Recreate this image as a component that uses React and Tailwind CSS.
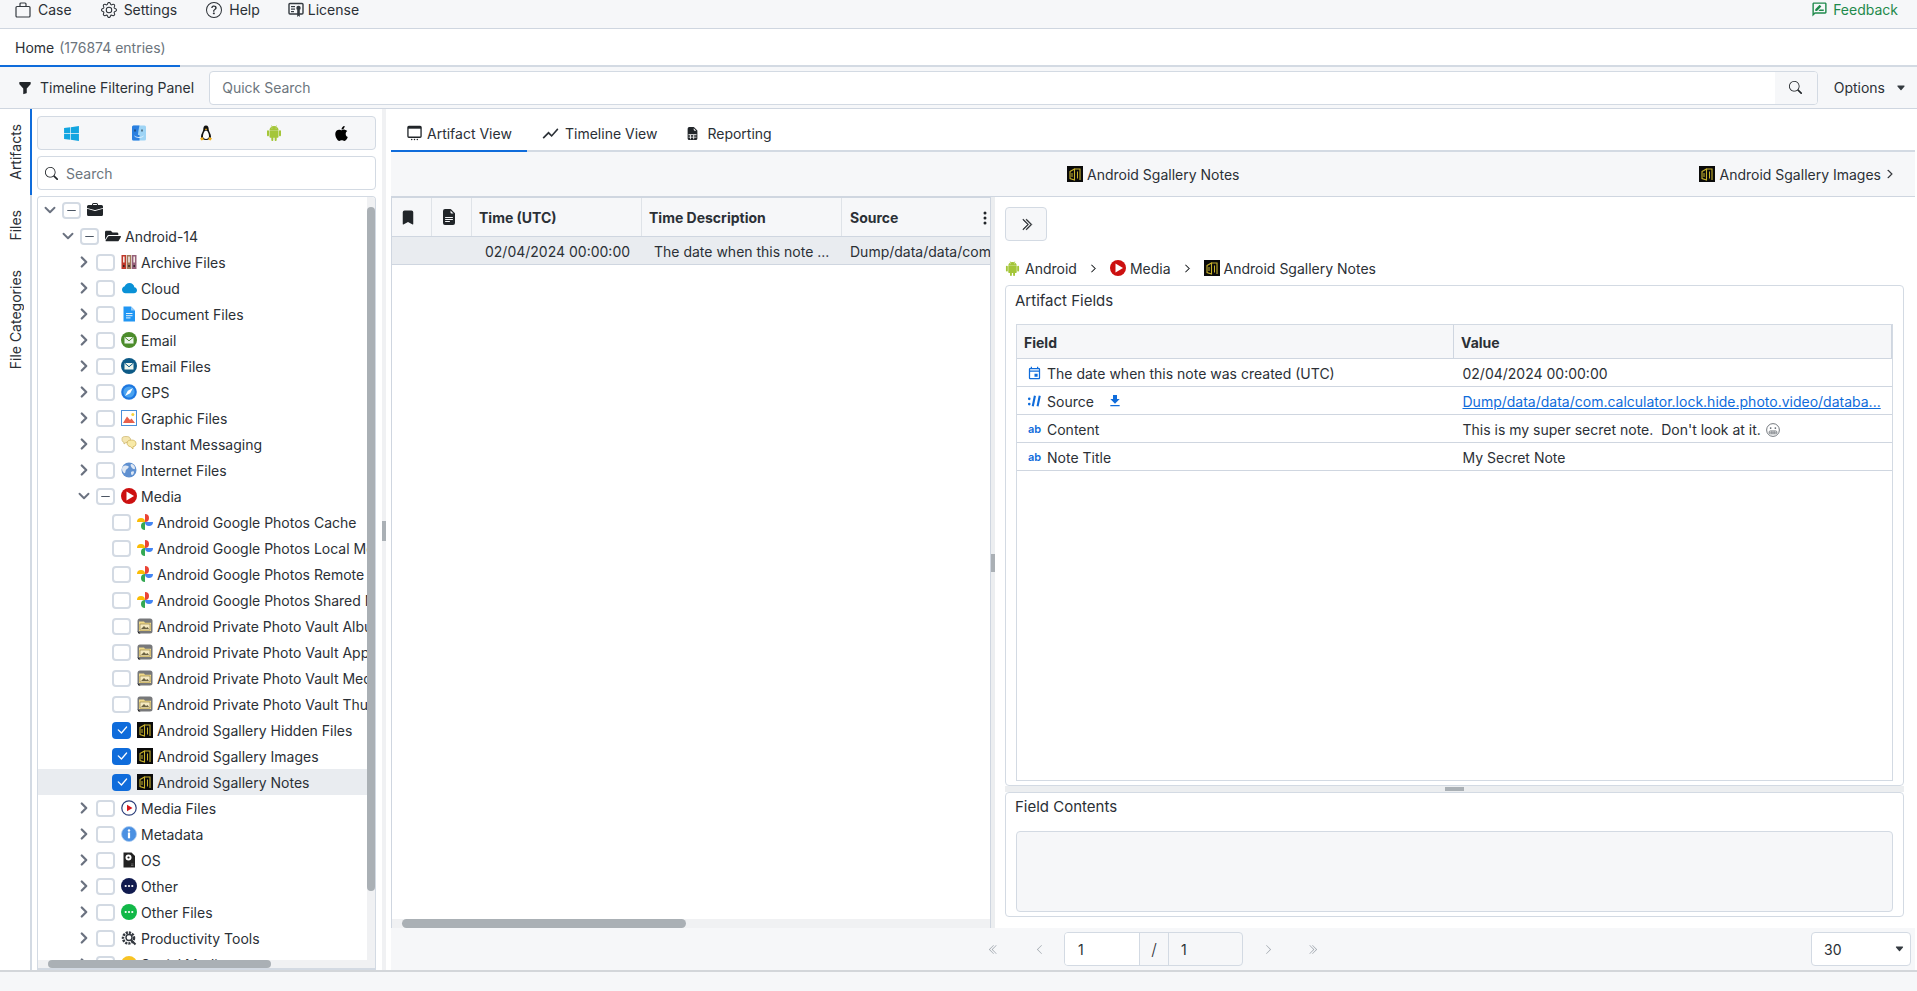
import React from "react";
import {
  BsGear, BsQuestionCircle, BsFunnelFill, BsSearch, BsBriefcaseFill, BsCloudFill,
  BsChevronRight, BsChevronDoubleRight, BsChevronDoubleLeft, BsChevronLeft, BsThreeDotsVertical,
  BsFileEarmarkSpreadsheetFill, BsCheckLg, BsBookmarkFill, BsFileEarmarkTextFill, BsCaretDownFill, BsAndroid2,
} from "react-icons/bs";
import { MdOutlineRateReview, MdShowChart, MdOutlineEvent, MdFileDownload } from "react-icons/md";
import { FaWindows, FaApple, FaFolderOpen } from "react-icons/fa";
import { ChevronRight, ChevronDown, Minus } from "lucide-react";

const Svg = ({ children, className = "w-4 h-4 shrink-0" }) => (
  <svg viewBox="0 0 16 16" className={className}>{children}</svg>
);

const CaseIcon = () => (
  <Svg>
    <rect x="1" y="4.500" width="14" height="10.500" rx="1" fill="none" stroke="#343a40" strokeWidth="1.200" />
    <path d="M5 4.500V2a1 1 0 0 1 1-1h4a1 1 0 0 1 1 1v2.500" fill="none" stroke="#343a40" strokeWidth="1.200" />
  </Svg>
);
const LicenseIcon = () => (
  <Svg>
    <rect x="1" y="1.500" width="14" height="10.500" rx="1" fill="none" stroke="#343a40" strokeWidth="1.400" />
    <rect x="3" y="4" width="4" height="1.200" fill="#343a40" />
    <rect x="3" y="6.500" width="4" height="1.200" fill="#343a40" />
    <rect x="3" y="9" width="3" height="1.200" fill="#343a40" />
    <circle cx="10.500" cy="6" r="2.200" fill="#343a40" />
    <path d="M9.200 8v7l1.300-1.200 1.300 1.200V8z" fill="#343a40" />
  </Svg>
);
const ArtifactViewIcon = () => (
  <Svg className="w-[15px] h-[18px] shrink-0">
    <rect x="1" y="1" width="14" height="11.500" rx="1" fill="none" stroke="#212529" strokeWidth="1.400" />
    <rect x="1" y="1" width="14" height="2.400" fill="#212529" />
    <circle cx="5" cy="15" r=".8" fill="#212529" /><circle cx="8" cy="15" r=".8" fill="#212529" /><circle cx="11" cy="15" r=".8" fill="#212529" />
  </Svg>
);
const Finder = () => (
  <Svg>
    <rect x="1" y="0.500" width="14" height="15" rx="1.500" fill="#9ed4f5" />
    <path d="M1 2a1.500 1.500 0 0 1 1.500-1.500H8.500C7.500 5 7 8 7 10H8.500V15.500H2.500A1.500 1.500 0 0 1 1 14z" fill="#2a7fe0" />
    <path d="M4 4.500v2M11 4.500v2" stroke="#123" strokeWidth="1" />
    <path d="M3.500 11c2.500 2 6.500 2 9 0" stroke="#e8f4ff" strokeWidth=".9" fill="none" />
  </Svg>
);
const Tux = () => (
  <Svg className="w-4 h-[18px] shrink-0">
    <path d="M8 .5C5.800.5 5.300 2.500 5.300 4.500 5.300 6.500 3 8.500 3 11.500c0 2 2 3.500 5 3.500s5-1.500 5-3.500c0-3-2.300-5-2.300-7C10.700 2.500 10.200.5 8 .5z" fill="#111" />
    <path d="M8 5.500c-1.500 0-3 3-3 6 0 1.500 1.300 2.500 3 2.500s3-1 3-2.500c0-3-1.500-6-3-6z" fill="#fff" />
    <path d="M6.800 4.300L8 3.500l1.200.8L8 5.300z" fill="#f2b01e" />
    <path d="M2 13.500l2.500-1.500 1.500 2.500-2.500 1zM14 13.500L11.500 12 10 14.500l2.500 1z" fill="#f2b01e" />
  </Svg>
);
const Binders = () => (
  <Svg>
    <rect x="0.500" y="1" width="4.600" height="14" fill="#c0392b" />
    <rect x="5.700" y="1" width="4.600" height="14" fill="#a0785a" />
    <rect x="10.900" y="1" width="4.600" height="14" fill="#96607a" />
    <path d="M2 2.500h1.600v6H2zM7.200 2.500h1.600v6H7.200zM12.400 2.500H14v6h-1.600z" fill="#f3e9e4" />
    <circle cx="2.800" cy="12" r=".9" fill="#222" /><circle cx="8" cy="12" r=".9" fill="#222" /><circle cx="13.200" cy="12" r=".9" fill="#222" />
  </Svg>
);
const DocBlue = () => (
  <Svg>
    <path d="M2.500 0.500h7.500l4 4v11h-11.500z" fill="#2196f3" />
    <path d="M10 0.500v4h4z" fill="#90caf9" />
    <path d="M5 7.500h6.500M5 9.700h6.500M5 11.900h4.500" stroke="#e3f2fd" strokeWidth="1" />
  </Svg>
);
const EnvelopeCircle = ({ color }) => (
  <Svg>
    <circle cx="8" cy="8" r="8" fill={color} />
    <rect x="3.500" y="5" width="9" height="6.500" fill="#eef6ee" />
    <path d="M3.500 5L8 8.800 12.500 5" stroke={color} strokeWidth="1" fill="none" />
  </Svg>
);
const Compass = () => (
  <Svg>
    <circle cx="8" cy="8" r="7.800" fill="#1e78e0" />
    <circle cx="8" cy="8" r="5.600" fill="#4aa3f0" />
    <path d="M12 4L9.200 9.200 4 12 6.800 6.800z" fill="#fff" />
  </Svg>
);
const Picture = () => (
  <Svg>
    <rect x="0.500" y="0.500" width="15" height="15" fill="#fff" stroke="#4a90d9" />
    <path d="M2 13l4-6.500 3 3.500 1.500-1.500L14 13z" fill="#e8604c" />
    <circle cx="11.800" cy="4.600" r="1.500" fill="#f6d33c" />
  </Svg>
);
const Chat = () => (
  <Svg>
    <path d="M1 2.500C1 1 2.500.5 5 .5S9.500 1 9.500 3.500 8 6.500 5 6.500L3 8V6.300C1.500 6 1 5 1 3.500z" fill="#f5e6b0" stroke="#c9b26a" strokeWidth=".7" />
    <path d="M6 7c0-2 2-3 4.500-3S15 5 15 7.500 13.500 10.500 12 10.700V13l-2.500-2.300C7.500 10.500 6 9 6 7z" fill="#f8eaa8" stroke="#c9a94e" strokeWidth=".7" />
  </Svg>
);
const Globe = () => (
  <Svg>
    <circle cx="8" cy="8" r="7.500" fill="#5f90d0" />
    <path d="M3 4c2-1 3 0 4 0s1 2-1 3-1 3-2 4-3-2-3-4 1-3 2-3zM10 2c2 0 4 2 4 4s-2 1-3 0-2-3-1-4z" fill="#dfe8f4" />
    <path d="M10 10c1-1 3-1 3 0s-1 3-2 3-1-2-1-3z" fill="#dfe8f4" />
  </Svg>
);
const PlayRed = () => (
  <Svg>
    <circle cx="8" cy="8" r="8" fill="#cc1010" />
    <path d="M5.500 3.500L13 8l-7.500 4.500z" fill="#fff" />
  </Svg>
);
const Pinwheel = () => (
  <Svg>
    <path d="M0 8a4 4 0 0 1 8 0z" fill="#fbbc04" />
    <path d="M8 0a4 4 0 0 1 0 8z" fill="#ea4335" />
    <path d="M16 8a4 4 0 0 1-8 0z" fill="#4285f4" />
    <path d="M8 16a4 4 0 0 1 0-8z" fill="#34a853" />
  </Svg>
);
const Vault = () => (
  <Svg>
    <rect x="0.500" y="0.500" width="15" height="15" rx="2.500" fill="#77787a" />
    <path d="M2 3.500h5l1 1.200h6V13H2z" fill="#f0d98a" />
    <path d="M3 6h10v6H3z" fill="#f5e9c0" stroke="#8a7a3a" strokeWidth=".6" />
    <path d="M4 11l3-3 2 2 1.500-1 1.500 2z" fill="#6b6242" />
    <path d="M0.500 13l3 2.500h-2z" fill="#111" />
  </Svg>
);
const Sgallery = () => (
  <Svg>
    <rect width="16" height="16" fill="#0a0a0a" />
    <path d="M3 5.500L7.500 3v11L3 12.500zM7.500 3H13v11" fill="none" stroke="#c8b22c" strokeWidth="1.100" />
    <path d="M5 7v4M10.500 5.500v7" stroke="#c8b22c" strokeWidth="1" />
  </Svg>
);
const MediaFiles = () => (
  <Svg>
    <circle cx="8" cy="8" r="7.200" fill="#fff" stroke="#2c3e7a" strokeWidth="1.200" />
    <path d="M6 4.800L11.500 8 6 11.200z" fill="#d8151b" />
  </Svg>
);
const Info = () => (
  <Svg>
    <circle cx="8" cy="8" r="7.500" fill="#4a90e2" stroke="#a8c9f0" strokeWidth=".8" />
    <circle cx="8" cy="4.500" r="1.200" fill="#fff" />
    <rect x="6.900" y="6.500" width="2.200" height="5.800" fill="#fff" />
  </Svg>
);
const OsIcon = () => (
  <Svg>
    <path d="M2.500 0.500h8l3.500 3.500v11.500H2.500z" fill="#222" />
    <circle cx="7.500" cy="5.500" r="3" fill="#fff" />
    <circle cx="7.500" cy="5.500" r="1.100" fill="#222" />
    <path d="M10 12h2.500M10 13.500h2.500" stroke="#888" strokeWidth=".6" />
  </Svg>
);
const Dots = ({ color }) => (
  <Svg>
    <circle cx="8" cy="8" r="8" fill={color} />
    <circle cx="4.700" cy="8" r="1.100" fill="#fff" /><circle cx="8" cy="8" r="1.100" fill="#fff" /><circle cx="11.300" cy="8" r="1.100" fill="#fff" />
  </Svg>
);
const Prod = () => (
  <Svg>
    <circle cx="7.500" cy="8" r="5.500" fill="none" stroke="#33383f" strokeWidth="2.500" strokeDasharray="2.200 1" />
    <circle cx="8" cy="7.500" r="3" fill="#fff" stroke="#33383f" strokeWidth="1.400" />
    <path d="M10 10l4.500 4.500" stroke="#33383f" strokeWidth="2" />
  </Svg>
);
const Smile = () => (
  <Svg>
    <circle cx="8" cy="8" r="8" fill="#f7c325" />
    <circle cx="5.500" cy="6" r="1" fill="#5a3a00" /><circle cx="10.500" cy="6" r="1" fill="#5a3a00" />
  </Svg>
);
const SourceIcon = () => (
  <Svg className="w-[15px] h-[14px] shrink-0">
    <circle cx="2" cy="5.500" r="1.500" fill="#0f6cdb" /><circle cx="2" cy="11.500" r="1.500" fill="#0f6cdb" />
    <path d="M8.500 2L6 14M14 2l-2.500 12" stroke="#0f6cdb" strokeWidth="2.400" />
  </Svg>
);
const Grimace = () => (
  <Svg className="inline-block w-[14px] h-[14px] ml-[1px] align-[-2px]">
    <circle cx="8" cy="8" r="7.300" fill="#fff" stroke="#5f656c" strokeWidth="1" />
    <circle cx="5.300" cy="5.800" r="1" fill="#5f656c" /><circle cx="10.700" cy="5.800" r="1" fill="#5f656c" />
    <rect x="3.500" y="9" width="9" height="3.400" rx="1.500" fill="#fff" stroke="#5f656c" strokeWidth=".8" />
    <path d="M3.500 10.700h9M6 9v3.400M8 9v3.400M10 9v3.400" stroke="#5f656c" strokeWidth=".6" />
  </Svg>
);

const Check = ({ state }) => {
  if (state === "on")
    return (
      <span className="w-[19px] h-[17px] rounded-[4px] bg-[#0f6cdb] flex items-center justify-center shrink-0">
        <BsCheckLg className="text-white w-[14px] h-[14px]" />
      </span>
    );
  return (
    <span className="w-[19px] h-[17px] rounded-[4px] border-2 border-[#d3dae3] bg-white flex items-center justify-center shrink-0">
      {state === "mixed" && <Minus className="w-[13px] h-[13px] text-[#4b5563]" strokeWidth={2.2} />}
    </span>
  );
};

const levelPad = ["pl-0", "pl-[18px]", "pl-[34px]", "pl-[50px]"];

const Row = ({ level, open, leaf, check, icon, label, selected }) => (
  <div className={`flex items-center h-[26px] shrink-0 whitespace-nowrap ${levelPad[level]} ${selected ? "bg-[#e9ecf0]" : ""}`}>
    <span className="w-[24px] shrink-0 flex justify-center">
      {leaf ? null : open ? (
        <ChevronDown className="w-[18px] h-[18px] text-[#6b7280]" strokeWidth={2.5} />
      ) : (
        <ChevronRight className="w-[18px] h-[18px] text-[#6b7280]" strokeWidth={3} />
      )}
    </span>
    <Check state={check} />
    <span className="ml-[6px] w-4 flex justify-center shrink-0">{icon}</span>
    {label && <span className="ml-[4px]">{label}</span>}
  </div>
);

const rows = [
  { level: 0, open: true, check: "mixed", icon: <BsBriefcaseFill className="w-4 h-4 text-[#212529]" /> },
  { level: 1, open: true, check: "mixed", icon: <FaFolderOpen className="w-4 h-4 text-[#212529]" />, label: "Android-14" },
  { level: 2, icon: <Binders />, label: "Archive Files" },
  { level: 2, icon: <BsCloudFill className="w-[15px] h-[15px] text-[#0a91d6]" />, label: "Cloud" },
  { level: 2, icon: <DocBlue />, label: "Document Files" },
  { level: 2, icon: <EnvelopeCircle color="#4c8c2b" />, label: "Email" },
  { level: 2, icon: <EnvelopeCircle color="#0d5a86" />, label: "Email Files" },
  { level: 2, icon: <Compass />, label: "GPS" },
  { level: 2, icon: <Picture />, label: "Graphic Files" },
  { level: 2, icon: <Chat />, label: "Instant Messaging" },
  { level: 2, icon: <Globe />, label: "Internet Files" },
  { level: 2, open: true, check: "mixed", icon: <PlayRed />, label: "Media" },
  { level: 3, leaf: true, icon: <Pinwheel />, label: "Android Google Photos Cache" },
  { level: 3, leaf: true, icon: <Pinwheel />, label: "Android Google Photos Local Media" },
  { level: 3, leaf: true, icon: <Pinwheel />, label: "Android Google Photos Remote Media" },
  { level: 3, leaf: true, icon: <Pinwheel />, label: "Android Google Photos Shared Media" },
  { level: 3, leaf: true, icon: <Vault />, label: "Android Private Photo Vault Albums" },
  { level: 3, leaf: true, icon: <Vault />, label: "Android Private Photo Vault App" },
  { level: 3, leaf: true, icon: <Vault />, label: "Android Private Photo Vault Media" },
  { level: 3, leaf: true, icon: <Vault />, label: "Android Private Photo Vault Thumbnails" },
  { level: 3, leaf: true, check: "on", icon: <Sgallery />, label: "Android Sgallery Hidden Files" },
  { level: 3, leaf: true, check: "on", icon: <Sgallery />, label: "Android Sgallery Images" },
  { level: 3, leaf: true, check: "on", icon: <Sgallery />, label: "Android Sgallery Notes", selected: true },
  { level: 2, icon: <MediaFiles />, label: "Media Files" },
  { level: 2, icon: <Info />, label: "Metadata" },
  { level: 2, icon: <OsIcon />, label: "OS" },
  { level: 2, icon: <Dots color="#101a4e" />, label: "Other" },
  { level: 2, icon: <Dots color="#12b848" />, label: "Other Files" },
  { level: 2, icon: <Prod />, label: "Productivity Tools" },
  { level: 2, icon: <Smile />, label: "Social Media" },
];

const MenuItem = ({ icon, label, className = "gap-[7px]" }) => (
  <div className={`flex items-center ${className}`}>{icon}<span>{label}</span></div>
);

const FieldRow = ({ icon, field, extra, value, link }) => (
  <div className="grid grid-cols-2 h-[28px] border-b border-[#cfd6e0] items-center shrink-0">
    <div className="flex items-center pl-[10px] pt-[1px]">
      <span className="w-[15px] flex justify-center shrink-0">{icon}</span>
      <span className="ml-[5px]">{field}</span>
      {extra}
    </div>
    <div className={`pl-[8px] pt-[1px] whitespace-nowrap ${link ? "text-[#0f6cdb] underline" : ""}`}>{value}</div>
  </div>
);

const Ab = () => <span className="text-[#0f6cdb] text-[11px] font-semibold leading-none">ab</span>;

const BoldRight = ({ className }) => <BsChevronRight className={className} stroke="currentColor" strokeWidth={1} />;

export default function App() {
  return (
    <div className="w-[1917px] h-[991px] flex flex-col overflow-hidden bg-white text-[14px] text-[#2b3036] font-[family-name:Inter,sans-serif]">
      {/* Menu bar */}
      <div className="h-[29px] shrink-0 flex items-center justify-between pl-[15px] pr-[19px] pb-[9px] bg-[#f6f7f9] border-b border-[#cfd6e0]">
        <div className="flex items-center gap-[29px]">
          <MenuItem icon={<CaseIcon />} label="Case" />
          <MenuItem icon={<BsGear className="w-4 h-4" />} label="Settings" />
          <MenuItem icon={<BsQuestionCircle className="w-4 h-4" />} label="Help" />
          <MenuItem icon={<LicenseIcon />} label="License" className="gap-[4px] -ml-px" />
        </div>
        <div className="flex items-center gap-[5px] text-[#1f8a4c]">
          <MdOutlineRateReview className="w-[17px] h-[17px]" />
          <span>Feedback</span>
        </div>
      </div>

      {/* Tab strip */}
      <div className="h-[38px] shrink-0 border-b-2 border-[#d3dae3] flex">
        <div className="w-[180px] h-[38px] pl-[15px] flex items-center gap-[5px] border-b-2 border-[#0f6cdb]">
          <span>Home</span>
          <span className="text-[#6c757d]">(176874 entries)</span>
        </div>
      </div>

      {/* Toolbar */}
      <div className="h-[42px] shrink-0 bg-[#f6f7f9] border-b border-[#cfd6e0] flex items-center pl-[18px] pr-[10px]">
        <BsFunnelFill className="w-[14px] h-[14px] text-[#212529]" />
        <span className="ml-[8px]">Timeline Filtering Panel</span>
        <div className="ml-[15px] flex-1 h-[34px] flex border border-[#d3dae3] rounded-[4px] bg-white overflow-hidden">
          <span className="flex-1 pl-[12px] flex items-center text-[#6c757d]">Quick Search</span>
          <span className="w-[42px] bg-[#f6f7f9] flex items-center justify-center">
            <BsSearch className="w-[13px] h-[13px] text-[#212529]" />
          </span>
        </div>
        <span className="ml-[16px]">Options</span>
        <BsCaretDownFill className="ml-[10px] w-[12px] h-[10px] text-[#343a40]" />
      </div>

      {/* Main */}
      <div className="flex-1 min-h-0 flex">
        {/* Side tabs */}
        <div className="w-[32px] shrink-0 border-r-2 border-[#d3dae3] flex flex-col items-start">
          <div className="w-[32px] -mr-[2px] border-r-2 border-[#0f6cdb] pl-[1px] py-[15px] flex justify-center">
            <span className="[writing-mode:vertical-rl] rotate-180 leading-[18px]">Artifacts</span>
          </div>
          <div className="w-[31px] py-[15px] flex justify-center">
            <span className="[writing-mode:vertical-rl] rotate-180 leading-[18px]">Files</span>
          </div>
          <div className="w-[31px] py-[15px] flex justify-center">
            <span className="[writing-mode:vertical-rl] rotate-180 leading-[18px]">File Categories</span>
          </div>
        </div>

        {/* Left panel */}
        <div className="w-[350px] shrink-0 pl-[5px] pr-[6px] pt-[7px] flex flex-col gap-[6px]">
          <div className="h-[34px] shrink-0 rounded-[4px] border border-[#d3dae3] bg-[#f6f7f9] grid grid-cols-5 items-center justify-items-center">
            <FaWindows className="w-[17px] h-[17px] text-[#12a5e0]" />
            <Finder />
            <Tux />
            <BsAndroid2 className="w-4 h-4 text-[#a4c639]" />
            <FaApple className="w-[17px] h-[17px] text-black" />
          </div>
          <div className="h-[34px] shrink-0 rounded-[4px] border border-[#d3dae3] bg-white flex items-center pl-[7px]">
            <BsSearch className="w-[13px] h-[13px] text-[#212529]" />
            <span className="ml-[8px] text-[#6c757d]">Search</span>
          </div>
          <div className="flex-1 min-h-0 border border-b-2 border-[#d3dae3] rounded-t-[4px] flex flex-col overflow-hidden">
            <div className="flex-1 min-h-0 flex">
              <div className="flex-1 min-w-0 overflow-hidden flex flex-col">
                {rows.map((r, i) => <Row key={i} {...r} />)}
              </div>
              <div className="w-[8px] shrink-0 bg-[#f0f1f3] pt-[10px]">
                <div className="h-[684px] bg-[#aab0b5] rounded-full" />
              </div>
            </div>
            <div className="h-[8px] shrink-0 bg-[#f0f1f3] pl-[10px]">
              <div className="w-[223px] h-[8px] bg-[#aab0b5] rounded-full" />
            </div>
          </div>
        </div>

        {/* Splitter */}
        <div className="w-[4px] shrink-0 bg-[#f0f1f3] flex items-center pb-[18px]">
          <div className="w-[4px] h-[20px] bg-[#aab0b5]" />
        </div>

        {/* Right area */}
        <div className="flex-1 min-w-0 pl-[5px] pr-[2px] flex flex-col">
          <div className="h-[43px] shrink-0 flex items-stretch border-b-2 border-[#d3dae3]">
            <div className="w-[136px] h-[43px] flex items-center pl-[16px] pt-[7px] border-b-2 border-[#0f6cdb] gap-[5px]">
              <ArtifactViewIcon /><span>Artifact View</span>
            </div>
            <div className="flex items-center ml-[14px] pt-[7px] gap-[5px]">
              <MdShowChart className="w-[19px] h-[19px]" /><span>Timeline View</span>
            </div>
            <div className="flex items-center ml-[29px] pt-[7px] gap-[8px]">
              <BsFileEarmarkSpreadsheetFill className="w-[13px] h-[15px] text-[#212529]" /><span>Reporting</span>
            </div>
          </div>

          <div className="h-[45px] shrink-0 bg-[#f6f7f9] border-b border-[#cfd6e0] flex items-center justify-between pl-[676px] pr-[20px]">
            <div className="flex items-center gap-[4px]">
              <Sgallery /><span>Android Sgallery Notes</span>
            </div>
            <div className="flex items-center gap-[4px]">
              <Sgallery /><span>Android Sgallery Images</span>
              <BoldRight className="w-[10px] h-[10px] text-[#212529]" />
            </div>
          </div>

          <div className="flex-1 min-h-0 flex">
            {/* Results table */}
            <div className="w-[600px] shrink-0 border-x border-t border-[#cfd6e0] flex flex-col overflow-hidden">
              <div className="flex-1 min-h-0 overflow-hidden">
                <div className="flex h-[39px] bg-[#f6f7f9] border-b border-[#cfd6e0] font-bold items-stretch whitespace-nowrap">
                  <div className="w-[40px] shrink-0 border-r border-[#dfe3e8] flex items-center pl-[9px]"><BsBookmarkFill className="w-[14px] h-[15px] text-[#212529]" /></div>
                  <div className="w-[40px] shrink-0 border-r border-[#dfe3e8] flex items-center pl-[9px]"><BsFileEarmarkTextFill className="w-[16px] h-[16px] text-[#212529]" /></div>
                  <div className="w-[170px] shrink-0 border-r border-[#dfe3e8] flex items-center pl-[7px] pt-[1px]">Time (UTC)</div>
                  <div className="w-[200px] shrink-0 border-r border-[#dfe3e8] flex items-center pl-[7px] pt-[1px]">Time Description</div>
                  <div className="flex-1 flex items-center justify-between pl-[8px] pt-[1px]">
                    <span>Source</span>
                    <BsThreeDotsVertical className="w-4 h-4 text-[#212529] mr-[-3px]" />
                  </div>
                </div>
                <div className="flex h-[28px] bg-[#e9ecf0] border-b border-[#cfd6e0] items-center pt-[1px] whitespace-nowrap">
                  <div className="w-[80px] shrink-0" />
                  <div className="w-[170px] shrink-0 pl-[13px]">02/04/2024 00:00:00</div>
                  <div className="w-[200px] shrink-0 pl-[12px]">The date when this note ...</div>
                  <div className="flex-1 min-w-0 overflow-hidden pl-[8px]">Dump/data/data/com.calculator</div>
                </div>
              </div>
              <div className="h-[9px] shrink-0 bg-[#f0f1f3] pl-[10px]">
                <div className="w-[284px] h-[9px] bg-[#aab0b5] rounded-full" />
              </div>
            </div>

            {/* Splitter */}
            <div className="w-[4px] shrink-0 bg-[#eceef0] flex items-center">
              <div className="w-[4px] h-[18px] bg-[#aab0b5]" />
            </div>

            {/* Detail */}
            <div className="flex-1 min-w-0 pl-[10px] pr-[11px] pt-[10px] pb-[11px] flex flex-col">
              <div className="w-[42px] h-[34px] shrink-0 rounded-[4px] border border-[#d3dae3] bg-[#f6f7f9] flex items-center justify-center">
                <BsChevronDoubleRight className="w-[13px] h-[13px] text-[#212529]" stroke="currentColor" strokeWidth={0.6} />
              </div>
              <div className="h-[20px] mt-[17px] mb-[7px] shrink-0 flex items-center">
                <BsAndroid2 className="w-[15px] h-[15px] text-[#a4c639]" />
                <span className="ml-[5px]">Android</span>
                <BoldRight className="mx-[12px] w-[9px] h-[9px] text-[#212529]" />
                <PlayRed />
                <span className="ml-[4px]">Media</span>
                <BoldRight className="mx-[12px] w-[9px] h-[9px] text-[#212529]" />
                <Sgallery />
                <span className="ml-[4px]">Android Sgallery Notes</span>
              </div>
              <div className="flex-1 min-h-0 border border-[#d3dae3] rounded-[4px] px-[10px] pt-[5px] pb-[4px] flex flex-col">
                <div className="h-[20px] -ml-px text-[15px] leading-[20px] shrink-0">Artifact Fields</div>
                <div className="mt-[13px] flex-1 min-h-0 border border-[#d3dae3] flex flex-col">
                  <div className="grid grid-cols-2 h-[34px] shrink-0 bg-[#f6f7f9] border-b border-r border-[#cfd6e0] font-bold">
                    <div className="flex items-center pl-[7px] pt-[1px] border-r border-[#cfd6e0]">Field</div>
                    <div className="flex items-center pl-[7px] pt-[1px]">Value</div>
                  </div>
                  <FieldRow icon={<MdOutlineEvent className="w-4 h-4 text-[#0f6cdb]" />} field="The date when this note was created (UTC)" value="02/04/2024 00:00:00" />
                  <FieldRow
                    icon={<SourceIcon />}
                    field="Source"
                    extra={<MdFileDownload className="ml-[13px] w-4 h-4 text-[#0f6cdb]" />}
                    value="Dump/data/data/com.calculator.lock.hide.photo.video/databa..."
                    link
                  />
                  <FieldRow icon={<Ab />} field="Content" value={<>This is my super secret note.&nbsp; Don't look at it. <Grimace /></>} />
                  <FieldRow icon={<Ab />} field="Note Title" value="My Secret Note" />
                </div>
              </div>
              <div className="h-[6px] shrink-0 bg-[#eceef0] flex justify-center">
                <div className="w-[19px] h-[4px] mt-[1px] bg-[#aab0b5]" />
              </div>
              <div className="h-[125px] shrink-0 border border-[#d3dae3] rounded-[4px] px-[10px] pt-[4px] pb-[4px] flex flex-col">
                <div className="h-[20px] -ml-px text-[15px] leading-[20px] shrink-0">Field Contents</div>
                <div className="mt-[14px] flex-1 rounded-[4px] border border-[#d3dae3] bg-[#f6f7f9]" />
              </div>
            </div>
          </div>

          {/* Pagination */}
          <div className="h-[42px] shrink-0 bg-[#f6f7f9] flex items-center pr-[4px]">
            <div className="flex-1 flex items-center pl-[597px]">
              <BsChevronDoubleLeft className="w-[11px] h-[11px] text-[#9aa1a9]" />
              <BsChevronLeft className="ml-[35px] w-[11px] h-[11px] text-[#9aa1a9]" />
              <div className="ml-[19px] w-[179px] h-[34px] flex border border-[#d3dae3] rounded-[4px] overflow-hidden">
                <span className="w-[75px] bg-white flex items-center pl-[13px] border-r border-[#d3dae3]">1</span>
                <span className="w-[29px] flex items-center justify-center border-r border-[#d3dae3] text-[16px] font-light">/</span>
                <span className="flex-1 flex items-center pl-[12px]">1</span>
              </div>
              <BsChevronRight className="ml-[20px] w-[11px] h-[11px] text-[#9aa1a9]" />
              <BsChevronDoubleRight className="ml-[33px] w-[11px] h-[11px] text-[#9aa1a9]" />
            </div>
            <div className="w-[100px] h-[34px] rounded-[4px] border border-[#d3dae3] bg-white flex items-center justify-between pl-[12px] pr-[5px]">
              <span>30</span>
              <BsCaretDownFill className="w-[11px] h-[10px] text-[#343a40]" />
            </div>
          </div>
        </div>
      </div>

      {/* Status bar */}
      <div className="h-[21px] shrink-0 bg-[#f6f7f9] border-t-2 border-[#d3d6da]" />
    </div>
  );
}
